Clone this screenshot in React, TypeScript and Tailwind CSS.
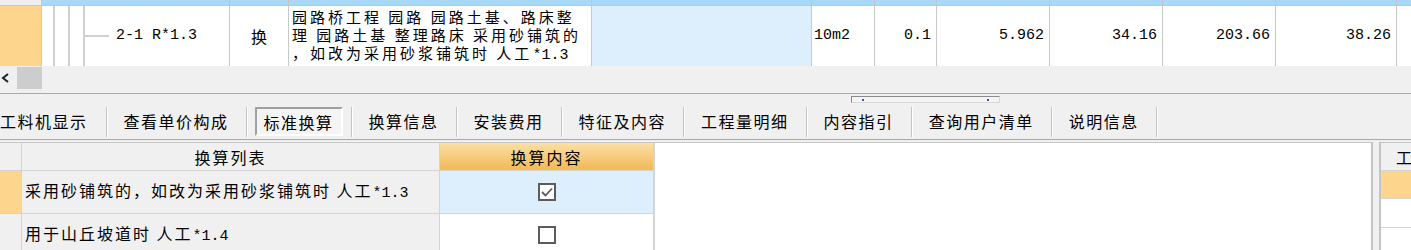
import React from 'react';

const cjk = '[font-family:"Noto_Sans_CJK_SC","Noto_Sans",sans-serif]';
const mono = 'font-["Liberation_Mono","Noto_Sans_CJK_SC",monospace]';

// top grid column widths (each includes its 1px right border)
const cols = [42, 188, 59, 303, 220, 63, 62, 113, 113, 113, 121];

function Cn({ children }: { children: React.ReactNode }) {
  return <span className="text-[16px] tracking-[2px] font-['Noto_Sans_CJK_SC',sans-serif]">{children}</span>;
}

function Lat({ children }: { children: React.ReactNode }) {
  return <span className="text-[15px] tracking-normal font-['Liberation_Mono',monospace]">{children}</span>;
}

function TopGrid() {
  return (
    <div className="flex flex-col bg-white shrink-0">
      {/* header strip */}
      <div className="flex h-[6px] shrink-0 border-b border-[#b9c9d6]">
        {cols.map((w, i) => (
          <div
            key={i}
            style={{ width: w }}
            className={i === 0 ? 'shrink-0 bg-[#f0f0f0] border-r border-[#c8c8c8]' : 'shrink-0 bg-[#a8d8f8] border-r border-[#c4c4c4]'}
          />
        ))}
        <div className="flex-1 bg-[#a8d8f8]" />
      </div>
      {/* data row */}
      <div className="flex h-[60px] shrink-0 text-black">
        <div style={{ width: cols[0] }} className="shrink-0 bg-[#fed58d] border-r border-[#c8c8c8]" />
        <div style={{ width: cols[1] }} className="shrink-0 flex border-r border-[#c8c8c8]">
          <div className="w-[13px] shrink-0 border-r-2 border-[#d0d0d0]" />
          <div className="w-[15px] shrink-0 border-r-2 border-[#d0d0d0]" />
          <div className="w-[15px] shrink-0 border-r-2 border-[#d0d0d0]" />
          <div className="flex items-center">
            <div className="w-[24px] h-[2px] bg-[#d0d0d0]" />
            <div className={`ml-[7px] ${mono} text-[15px] whitespace-nowrap`}>2-1 R*1.3</div>
          </div>
        </div>
        <div style={{ width: cols[2] }} className="shrink-0 flex items-center justify-center border-r border-[#c8c8c8]">
          <span className={`${cjk} text-[16px]`}>换</span>
        </div>
        <div
          style={{ width: cols[3] }}
          className="shrink-0 flex items-center pl-[3px] border-r border-[#c8c8c8] text-[15px] leading-[18px] tracking-[3px] font-['Noto_Sans_CJK_SC',sans-serif]"
        >
          <p className="whitespace-nowrap">
            园路桥工程 园路 园路土基、路床整
            <br />
            理 园路土基 整理路床 采用砂铺筑的
            <br />
            ，如改为采用砂浆铺筑时 人工<span className="tracking-normal font-['Liberation_Mono',monospace]">*1.3</span>
          </p>
        </div>
        <div style={{ width: cols[4] }} className="shrink-0 bg-[#ddeefd] border-r border-[#c8c8c8]" />
        <div style={{ width: cols[5] }} className={`shrink-0 flex items-center pl-[2px] ${mono} text-[15px] border-r border-[#c8c8c8]`}>10m2</div>
        {['0.1', '5.962', '34.16', '203.66', '38.26'].map((v, i) => (
          <div
            key={v}
            style={{ width: cols[6 + i] }}
            className={`shrink-0 flex items-center justify-end pr-[5px] ${mono} text-[15px] border-r border-[#c8c8c8]`}
          >
            {v}
          </div>
        ))}
        <div className="flex-1" />
      </div>
    </div>
  );
}

function ScrollBar() {
  return (
    <div className="flex h-[24px] shrink-0 bg-[#f0f0f0]">
      <div className="w-[17px] shrink-0 flex items-center pl-[1px]">
        <svg width="9" height="10" viewBox="0 0 9 10">
          <path d="M7 1 L2 5 L7 9" fill="none" stroke="#202020" strokeWidth="2" />
        </svg>
      </div>
      <div className="w-[25px] shrink-0 my-[1px] bg-[#cdcdcd]" />
    </div>
  );
}

const tabs = ['工料机显示', '查看单价构成', '标准换算', '换算信息', '安装费用', '特征及内容', '工程量明细', '内容指引', '查询用户清单', '说明信息'];

function TabLabel({ t }: { t: string }) {
  return <span className="text-[16px] tracking-[1.5px] font-['Noto_Sans_CJK_SC',sans-serif] text-black whitespace-nowrap">{t}</span>;
}

function TabStrip() {
  return (
    <div className="relative h-[47px] shrink-0 bg-[#f0f0f0] border-t border-[#a9a9a9] border-b border-b-[#a9a9a9]">
      <div className="absolute left-[851px] top-[2px] w-[149px] h-[7px] border border-[#8c8c8c] border-b-[#d8d8d8] border-r-[#d8d8d8] bg-[#f4f4f4] flex items-center justify-between px-[10px]">
        <div className="w-[2px] h-[2px] bg-[#3050c0]" />
        <div className="w-[2px] h-[2px] bg-[#3050c0]" />
      </div>
      <div className="flex items-end h-full pb-[2px]">
        {tabs.map((t, i) => (
          <div key={t} className="flex items-center h-[31px] shrink-0">
            {t === '标准换算' ? (
              <div className="ml-[7px] mr-[8px] px-[7px] h-[29px] flex items-center border-2 border-t-[#a0a0a0] border-l-[#a0a0a0] border-b-[#ffffff] border-r-[#ffffff] bg-[#f4f4f4]">
                <TabLabel t={t} />
              </div>
            ) : (
              <div className={i === 0 ? 'pr-[18px]' : 'pl-[16px] pr-[17px]'}>
                <TabLabel t={t} />
              </div>
            )}
            <div className="w-[2px] h-[30px] border-l border-[#c4c4c4] border-r border-r-white" />
          </div>
        ))}
      </div>
    </div>
  );
}

function CheckBox({ checked }: { checked: boolean }) {
  return (
    <div className="w-[18px] h-[18px] border-2 border-[#5c5c5c] bg-white flex items-center justify-center">
      {checked && (
        <svg width="12" height="10" viewBox="0 0 12 10">
          <path d="M1 5 L4.5 8.5 L11 1.5" fill="none" stroke="#5a5a5a" strokeWidth="1.8" />
        </svg>
      )}
    </div>
  );
}

function LowerPanel() {
  const rows = [
    { text: '采用砂铺筑的，如改为采用砂浆铺筑时 人工', num: '*1.3', checked: true },
    { text: '用于山丘坡道时 人工', num: '*1.4', checked: false },
  ];
  return (
    <div className="flex bg-[#f0f0f0] pt-[2px] h-[110px] shrink-0 overflow-hidden">
      <div className="w-[1373px] shrink-0 flex bg-white border-t border-[#c8c8c8] border-r-2 border-r-[#c4c4c4]">
        <div className="flex flex-col w-[655px] shrink-0 border-r-2 border-[#d4d4d4]">
          {/* header */}
          <div className="flex h-[28px] shrink-0 border-b border-[#d4d4d4]">
            <div className="w-[22px] shrink-0 bg-[#f0f0f0] border-r border-[#d4d4d4]" />
            <div className="w-[418px] shrink-0 bg-[#f0f0f0] border-r border-[#d4d4d4] flex items-center justify-center">
              <Cn>换算列表</Cn>
            </div>
            <div className="flex-1 bg-gradient-to-b from-[#fbdfa4] to-[#f2b954] flex items-center justify-center">
              <Cn>换算内容</Cn>
            </div>
          </div>
          {rows.map((r, i) => (
            <div key={i} className="flex h-[43px] shrink-0 border-b border-[#d4d4d4]">
              <div className={`w-[22px] shrink-0 border-r border-[#d4d4d4] ${i === 0 ? 'bg-[#fed58d]' : 'bg-[#f0f0f0]'}`} />
              <div className="w-[418px] shrink-0 bg-[#f0f0f0] border-r border-[#d4d4d4] flex items-center pl-[3px] whitespace-nowrap text-black">
                <span>
                  <Cn>{r.text}</Cn>
                  <Lat>{r.num}</Lat>
                </span>
              </div>
              <div className={`flex-1 flex items-center justify-center ${i === 0 ? 'bg-[#ddeefd]' : 'bg-white'}`}>
                <CheckBox checked={r.checked} />
              </div>
            </div>
          ))}
        </div>
        <div className="flex-1 bg-white" />
      </div>
      <div className="w-[6px] shrink-0" />
      <div className="flex-1 flex flex-col bg-white border-t border-l-2 border-[#c4c4c4] overflow-hidden">
        <div className="h-[28px] shrink-0 bg-[#f0f0f0] border-b border-[#d4d4d4] flex items-center pl-[15px] whitespace-nowrap">
          <Cn>工</Cn>
        </div>
        <div className="h-[28px] shrink-0 bg-[#fed58d] border-b border-[#d4d4d4]" />
        <div className="h-[29px] shrink-0 border-b border-[#d4d4d4]" />
      </div>
    </div>
  );
}

export default function App() {
  return (
    <div className="w-[1411px] h-[250px] overflow-hidden bg-[#f0f0f0] flex flex-col">
      <TopGrid />
      <ScrollBar />
      <div className="h-[3px] shrink-0 bg-[#f0f0f0]" />
      <TabStrip />
      <LowerPanel />
    </div>
  );
}
